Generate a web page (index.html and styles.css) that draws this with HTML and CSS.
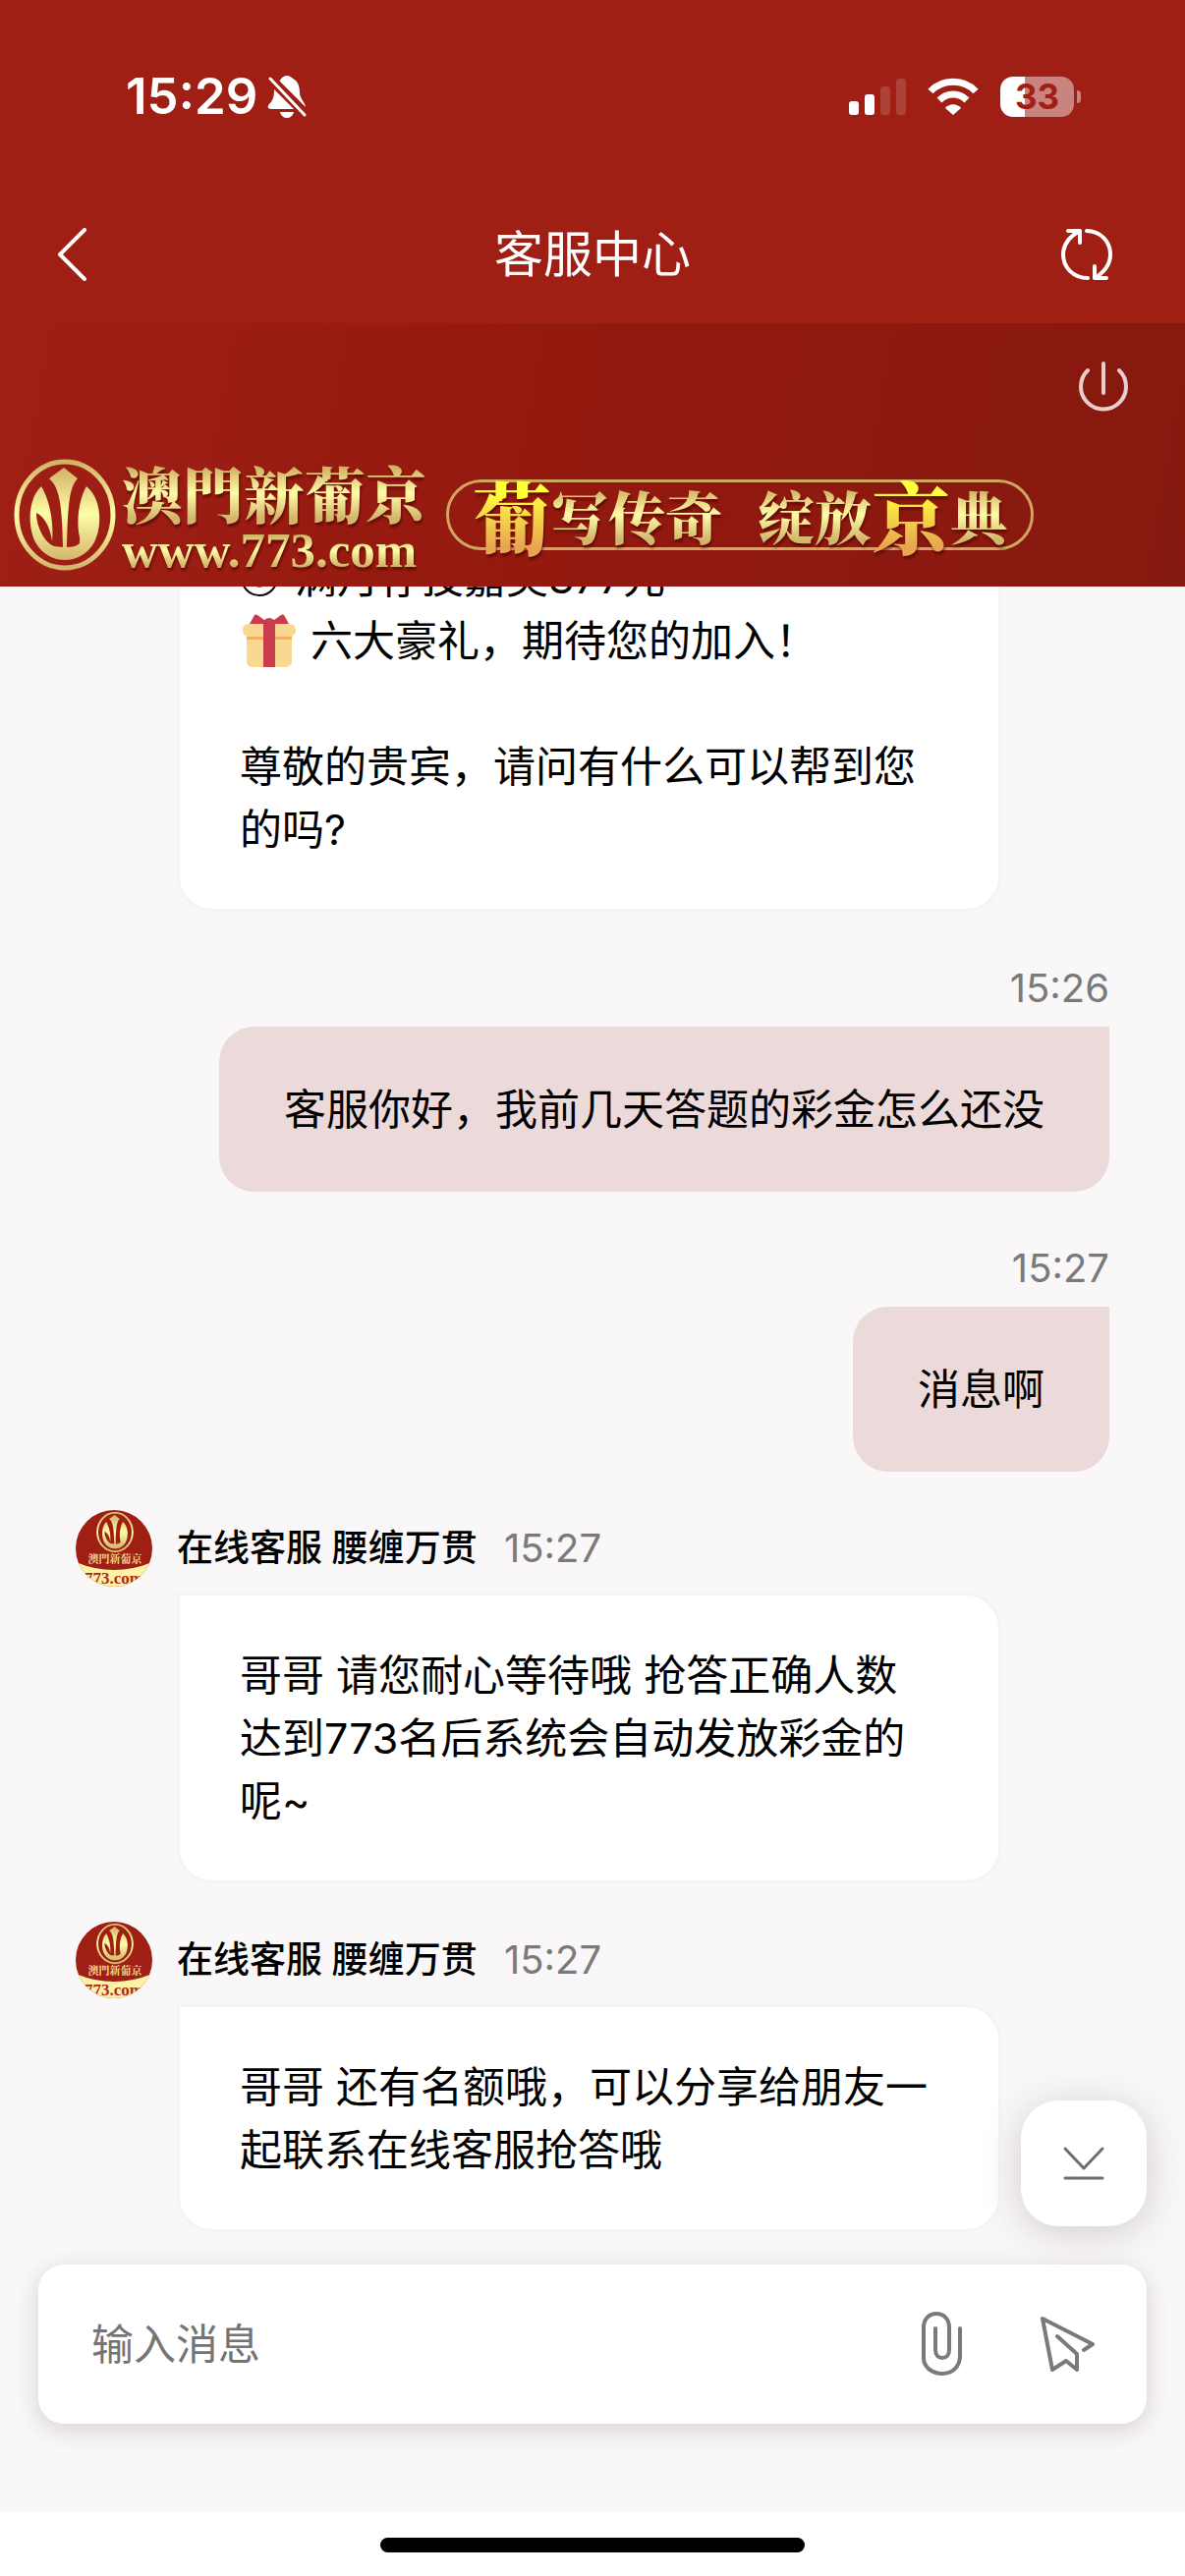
FILE: index.html
```html
<!DOCTYPE html>
<html lang="zh-CN">
<head>
  <meta charset="UTF-8">
  <meta name="viewport" content="width=device-width, initial-scale=1">
  <title>客服中心</title>
  <link rel="stylesheet" href="styles.css">
</head>
<body>

<!-- Shared artwork -->
<svg class="defs" width="0" height="0" aria-hidden="true">
  <defs>
    <linearGradient id="gold" x1="0" y1="0" x2="0" y2="1">
      <stop offset="0" stop-color="#d3b366"/>
      <stop offset="0.5" stop-color="#fffca6"/>
      <stop offset="1" stop-color="#d3b66c"/>
    </linearGradient>
    <symbol id="emblem" viewBox="0 0 104 116">
      <ellipse cx="52" cy="58" rx="49" ry="54" fill="none" stroke="url(#gold)" stroke-width="5"/>
      <path fill="url(#gold)" d="M51 10 L65 21 C57 30 55 44 54 91 C59 91 64 90 67 87 C68 70 72 55 79 55 C81 66 77 81 69 87 C62 70 66 42 74 29 C90 42 90 70 82 86 C75 98 64 104 52 104 C40 104 29 98 22 86 C14 70 14 42 28 29 C36 42 41 65 39 85 C37 70 31 60 23 56 C23 70 31 86 41 90 L50 91 C49 44 46 30 36 21 Z"/>
    </symbol>
    <symbol id="avatar" viewBox="0 0 78 78">
      <clipPath id="round"><circle cx="39" cy="39" r="39"/></clipPath>
      <g clip-path="url(#round)">
        <rect width="78" height="78" fill="#9f1f15"/>
        <path d="M0 53 Q39 69 78 53 V78 H0 Z" fill="#fdf3a5"/>
        <use href="#emblem" x="21" y="1" width="38" height="43"/>
        <text class="avatar-name" x="40" y="54" text-anchor="middle">澳門新葡京</text>
        <text class="avatar-url" x="39" y="75" text-anchor="middle">773.com</text>
      </g>
    </symbol>
  </defs>
</svg>

<header class="top">
  <div class="status-bar">
    <div class="status-left">
      <span class="clock">15:29</span>
      <svg width="42" height="44" viewBox="0 0 42 44">
        <path fill="#fff" d="M12 7 C14 3 17 1 20 1 C23 1 25 3 26 4 C31 6 33 12 33 18 C33 25 39 28 39 34 Z M7 15 L27 35 H4 C0 35 0 32 2 30 C5 27 7 24 7 15 Z M13 38 H27 C26 42 23 44 20 44 C17 44 14 42 13 38 Z"/>
        <path stroke="#9f1f15" stroke-width="3" d="M5 1 L41 37"/>
        <path stroke="#fff" stroke-width="3" stroke-linecap="round" d="M3 4 L38 41"/>
      </svg>
    </div>
    <div class="status-right">
      <svg width="58" height="38" viewBox="0 0 58 38" fill="#fff">
        <rect y="24" width="10" height="14" rx="3"/>
        <rect x="16" y="17" width="10" height="21" rx="3"/>
        <rect x="32" y="9" width="10" height="29" rx="3" opacity="0.15"/>
        <rect x="48" y="1" width="10" height="37" rx="3" opacity="0.15"/>
      </svg>
      <svg width="52" height="38" viewBox="0 0 52 38" fill="none" stroke="#fff" stroke-width="7">
        <path d="M3 14 C15 1 37 1 49 14"/>
        <path d="M12 23 C20 15 32 15 40 23"/>
        <path fill="#fff" stroke="none" d="M18 31 C22 26 30 26 34 31 L26 38 Z"/>
      </svg>
      <div class="battery"><span>33</span></div>
    </div>
  </div>

  <nav class="nav">
    <button class="icon-btn back" aria-label="返回">
      <svg width="32" height="54" viewBox="0 0 32 54" fill="none" stroke="#fff" stroke-width="4" stroke-linecap="round" stroke-linejoin="round"><path d="M29 2 L4 27 L29 52"/></svg>
    </button>
    <h1>客服中心</h1>
    <button class="icon-btn refresh" aria-label="刷新">
      <svg width="54" height="54" viewBox="0 0 54 54" fill="none" stroke="#fff" stroke-width="4" stroke-linecap="round" stroke-linejoin="round">
        <path d="M27 3 C41 3 51 14 51 27 C51 37 45 45 35 51 M35 39 V51 H47"/>
        <path d="M28 51 C13 51 3 40 3 27 C3 17 9 9 20 3 M8 3 H20 V15"/>
      </svg>
    </button>
  </nav>
</header>

<section class="banner">
  <button class="icon-btn power" aria-label="结束对话">
    <svg width="50" height="52" viewBox="0 0 50 52" fill="none" stroke="#e8cfce" stroke-width="4" stroke-linecap="round">
      <path d="M9 10 A23 23 0 1 0 41 10 M25 3 V33"/>
    </svg>
  </button>
  <div class="brand-row">
    <svg class="emblem" width="104" height="116"><use href="#emblem"/></svg>
    <div class="brand">
      <span class="brand-name">澳門新葡京</span>
      <span class="brand-url">www.773.com</span>
    </div>
    <div class="slogan">
      <b>葡</b><span>写传奇</span><span class="second">绽放</span><b>京</b><span>典</span>
    </div>
  </div>
</section>

<main class="chat">
  <article class="message agent">
    <div class="bubble">
      <p><svg class="smile" width="40" height="40" viewBox="0 0 40 40" fill="none" stroke="#000" stroke-width="2"><circle cx="20" cy="20" r="18"/><path d="M11 24 Q20 33 29 24"/><path d="M14 13 V16 M26 13 V16" stroke-width="3"/></svg> 满月存投嘉奖377元</p>
      <p><svg class="gift" width="56" height="54" viewBox="0 0 56 54">
        <rect x="5" y="18" width="46" height="36" rx="6" fill="#f9d992"/>
        <rect x="5" y="22" width="46" height="4" fill="#f2b15c"/>
        <rect x="1" y="10" width="54" height="13" rx="6" fill="#f9d992"/>
        <path d="M8 10 L13 1 Q14 0 16 1 L23 6 Q28 2 33 6 L40 1 Q42 0 43 1 L48 10 Z" fill="#ca3c4c"/>
        <rect x="22" y="6" width="12" height="48" fill="#ca3c4c"/>
      </svg> 六大豪礼，期待您的加入！</p>
      <p class="greeting">尊敬的贵宾，请问有什么可以帮到您的吗?</p>
    </div>
  </article>

  <article class="message user">
    <div class="meta"><time>15:26</time></div>
    <div class="bubble">客服你好，我前几天答题的彩金怎么还没</div>
  </article>

  <article class="message user">
    <div class="meta"><time>15:27</time></div>
    <div class="bubble">消息啊</div>
  </article>

  <article class="message agent">
    <div class="meta">
      <svg class="avatar" width="78" height="78"><use href="#avatar"/></svg>
      <strong>在线客服 腰缠万贯</strong>
      <time>15:27</time>
    </div>
    <div class="bubble">哥哥 请您耐心等待哦 抢答正确人数达到773名后系统会自动发放彩金的呢~</div>
  </article>

  <article class="message agent">
    <div class="meta">
      <svg class="avatar" width="78" height="78"><use href="#avatar"/></svg>
      <strong>在线客服 腰缠万贯</strong>
      <time>15:27</time>
    </div>
    <div class="bubble">哥哥 还有名额哦，可以分享给朋友一起联系在线客服抢答哦</div>
  </article>
</main>

<form class="composer">
  <button type="button" class="scroll-btn" aria-label="滚动到底部">
    <svg width="44" height="36" viewBox="0 0 44 36" fill="none" stroke="#6e6e6e" stroke-width="3" stroke-linecap="round" stroke-linejoin="round"><path d="M3 3 L22 23 L41 3 M3 33 H41"/></svg>
  </button>
  <input type="text" placeholder="输入消息" aria-label="输入消息">
  <button type="button" class="icon-btn" aria-label="附件">
    <svg width="42" height="66" viewBox="0 0 42 66" fill="none" stroke="#7a7a7a" stroke-width="4" stroke-linecap="round"><path d="M39 17 V45 C39 56 31 63 21 63 C10 63 2 56 2 47 V16 C2 7 8 2 15 2 C22 2 28 7 28 16 V39 C28 44 25 47 21 47 C17 47 14 44 14 39 V17"/></svg>
  </button>
  <button type="submit" class="icon-btn" aria-label="发送">
    <svg width="56" height="58" viewBox="0 0 56 58" fill="none" stroke="#7a7a7a" stroke-width="4" stroke-linecap="round" stroke-linejoin="round"><path d="M44 35 L53 29 L2 3 L12 55 L26 46 L37 55 V39 L17 21"/></svg>
  </button>
</form>

<footer class="home"><div class="home-bar"></div></footer>

</body>
</html>
```

FILE: styles.css
```css
* { box-sizing: border-box; }

body {
  margin: 0;
  height: 100vh;
  display: flex;
  flex-direction: column;
  background: #f9f7f8;
  color: #000;
  font-family: Inter, "Noto Sans CJK SC", sans-serif;
  font-size: 43px;
  line-height: 64px;
}

svg { display: block; flex: none; }
.defs { position: absolute; }

button {
  border: none;
  padding: 0;
  background: none;
  cursor: pointer;
}

/* Header */
.top {
  background: #9f1f15;
  color: #fff;
}

.status-bar {
  display: flex;
  justify-content: space-between;
  align-items: center;
  height: 188px;
  padding: 8px 113px 0 128px;
}

.status-left, .status-right {
  display: flex;
  align-items: center;
}

.status-left { gap: 10px; }
.status-right { gap: 22px; }

.clock {
  font-size: 51px;
  font-weight: 600;
}

.battery {
  position: relative;
  width: 75px;
  height: 41px;
  border-radius: 13px;
  background: linear-gradient(90deg, #fff 33%, #cb8380 33%);
  color: #9f1f15;
  font-size: 35px;
  font-weight: 700;
  line-height: 41px;
  text-align: center;
}

.battery::after {
  content: "";
  position: absolute;
  top: 14px;
  right: -7px;
  width: 4px;
  height: 13px;
  border-radius: 0 6px 6px 0;
  background: #cb8380;
}

.nav {
  display: grid;
  grid-template-columns: 1fr auto 1fr;
  align-items: center;
  height: 141px;
  padding: 0 73px 0 57px;
}

.nav h1 {
  margin: 0 0 0 -16px;
  padding-left: 32px;
  font-size: 50px;
  font-weight: 400;
}

.back { justify-self: start; }
.refresh { justify-self: end; }

/* Banner */
.banner {
  display: flex;
  flex-direction: column;
  height: 268px;
  padding: 38px 14px 15px;
  background: linear-gradient(100deg, #9f1f15 0%, #94190f 45%, #86190f 100%);
}

.power {
  align-self: flex-end;
  margin-right: 44px;
}

.brand-row {
  display: flex;
  align-items: center;
  margin-top: auto;
}

.brand {
  display: flex;
  flex-direction: column;
  margin-left: 6px;
}

.brand-name, .brand-url, .slogan span, .slogan b {
  background: linear-gradient(#d3b366 15%, #fffca6 50%, #d3b66c 85%);
  background-clip: text;
  -webkit-background-clip: text;
  color: transparent;
  filter: drop-shadow(1px 3px 1px rgba(70, 0, 0, 0.6));
}

.brand-name {
  font-family: "Noto Serif CJK TC", "Noto Sans CJK TC", serif;
  font-size: 62px;
  font-weight: 900;
  line-height: 72px;
}

.brand-url {
  font-family: "Liberation Serif", serif;
  font-size: 51px;
  font-weight: 700;
  line-height: 44px;
}

.slogan {
  display: flex;
  align-items: center;
  height: 72px;
  margin-left: 20px;
  padding: 0 24px;
  border: 3px solid #cda75e;
  border-radius: 36px;
  font-family: "Noto Serif CJK SC", "Noto Sans CJK SC", serif;
}

.slogan span {
  font-size: 58px;
  font-weight: 900;
  line-height: 72px;
}

.slogan .second { margin-left: 36px; }

.slogan b {
  font-size: 80px;
  font-weight: 900;
  line-height: 92px;
  background-image: linear-gradient(#ffff3c 25%, #e9a552 85%);
}

/* Messages */
.chat {
  flex: 1;
  min-height: 0;
  display: flex;
  flex-direction: column;
  justify-content: flex-end;
  gap: 39px;
  padding: 0 77px;
  overflow: hidden;
}

.message {
  display: flex;
  flex-direction: column;
  align-items: flex-start;
}

.user { align-items: flex-end; }

.meta {
  display: flex;
  align-items: center;
  height: 78px;
}

.meta strong {
  margin: 0 27px 0 25px;
  font-size: 37px;
  font-weight: 500;
}

time {
  color: #7a7a7a;
  font-size: 40px;
}

.bubble {
  padding: 52px 66px;
  border-radius: 36px;
  background: #ecd9d9;
}

.agent .bubble {
  max-width: 839px;
  margin: 6px 0 0 103px;
  padding: 49px 63px 49px 61px;
  border: 3px solid #f5f4f5;
  border-top-left-radius: 0;
  background: #fff;
}

.user .bubble { border-top-right-radius: 0; }

.bubble p {
  display: flex;
  align-items: center;
  margin: 0;
}

.bubble .greeting {
  display: block;
  margin-top: 64px;
}

.smile { margin-right: 16px; }
.gift { margin: 0 14px 0 2px; }

.avatar-name {
  fill: #f3d98a;
  font-family: "Noto Serif CJK TC", "Noto Sans CJK TC", serif;
  font-size: 11px;
  font-weight: 700;
}

.avatar-url {
  fill: #b3261b;
  font-family: "Liberation Serif", serif;
  font-size: 17px;
  font-weight: 700;
}

/* Message box */
.composer {
  position: relative;
  display: flex;
  align-items: center;
  height: 162px;
  margin: 33px 39px 90px;
  padding: 0 52px 0 54px;
  border-radius: 26px;
  background: #fff;
  box-shadow: 0 6px 24px rgba(60, 40, 40, 0.18);
}

.composer input {
  flex: 1;
  min-width: 0;
  padding: 0;
  border: none;
  outline: none;
  background: none;
  font: inherit;
}

.composer input::placeholder {
  color: #747474;
  opacity: 1;
}

.composer .icon-btn + .icon-btn { margin-left: 79px; }

.scroll-btn {
  position: absolute;
  right: 0;
  bottom: calc(100% + 39px);
  display: flex;
  align-items: center;
  justify-content: center;
  width: 128px;
  height: 128px;
  border-radius: 38px;
  background: #fff;
  box-shadow: 0 6px 40px rgba(60, 40, 40, 0.2);
}

.home {
  display: flex;
  justify-content: center;
  padding: 26px 0 24px;
  background: #fff;
}

.home-bar {
  width: 432px;
  height: 15px;
  border-radius: 8px;
  background: #000;
}
```
